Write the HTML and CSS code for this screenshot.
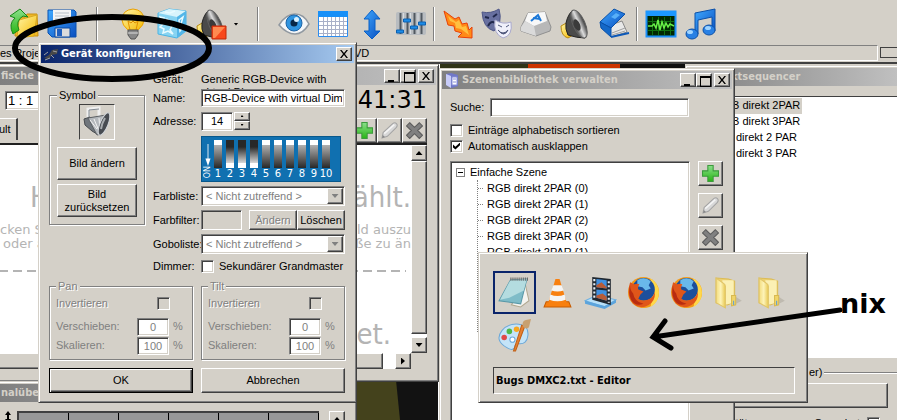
FILE: index.html
```html
<!DOCTYPE html>
<html lang="de">

<head>
    <meta charset="UTF-8">
    <title>Gerät konfigurieren</title>
    <link rel="stylesheet" href="styles.css">
</head>

<body>
    <!-- mehrfach verwendete Symbole -->
    <svg class="symbols" width="0" height="0">
        <defs>
            <linearGradient id="g-green" x1="0" y1="0" x2="0" y2="1">
                <stop offset="0" stop-color="#8be08b" />
                <stop offset="1" stop-color="#28b414" />
            </linearGradient>
            <linearGradient id="g-blue" x1="0" y1="0" x2="1" y2="1">
                <stop offset="0" stop-color="#3fa9ff" />
                <stop offset="1" stop-color="#0a4fc0" />
            </linearGradient>
            <linearGradient id="g-cone" x1="0" y1="0" x2="1" y2="0">
                <stop offset="0" stop-color="#333" />
                <stop offset="0.5" stop-color="#ddd" />
                <stop offset="1" stop-color="#333" />
            </linearGradient>
            <linearGradient id="g-yellow" x1="0" y1="0" x2="1" y2="1">
                <stop offset="0" stop-color="#fff6a8" />
                <stop offset="1" stop-color="#f5b800" />
            </linearGradient>
            <linearGradient id="g-folder" x1="0" y1="0" x2="1" y2="0">
                <stop offset="0" stop-color="#f3dc7c" />
                <stop offset="0.5" stop-color="#fdf3b8" />
                <stop offset="1" stop-color="#e8c850" />
            </linearGradient>
        </defs>
        <symbol id="i-plus" viewBox="0 0 16 16">
            <path d="M5.500 .5h5v5h5v5h-5v5h-5v-5h-5v-5h5z" fill="url(#g-green)" stroke="#3c9a3c" />
        </symbol>
        <symbol id="i-pencil" viewBox="0 0 16 16">
            <path d="M1 15l1-5L11 1.500q2-1.500 3.500 0t0 3.500L6 13.500z" fill="#d8d8d8" stroke="#a4a4a4" />
            <path d="M3 11L12.500 2.500" stroke="#f4f4f4" stroke-width="1.500" />
            <path d="M1 15l.7-2.700 2 1.900z" fill="#888" />
        </symbol>
        <symbol id="i-cross" viewBox="0 0 16 16">
            <path d="M3.500.7L8 5l4.500-4.300 3 3L11 8l4.500 4.500-3 3L8 11l-4.500 4.500-3-3L5 8 .5 3.700z" fill="#808080" stroke="#5c5c5c" />
        </symbol>
        <symbol id="i-speaker" viewBox="0 0 32 32">
            <path d="M2 18l7-4 5 13-5 3q-7-2-7-12z" fill="url(#g-yellow)" stroke="#b88a10" />
            <path d="M7 15q2-9 7-13l12 28q-8 0-17-3-3-6-2-12z" fill="#4a4a4a" stroke="#222" />
            <ellipse cx="20" cy="16" rx="6" ry="15" transform="rotate(-24 20 16)" fill="url(#g-cone)" stroke="#606060" />
            <ellipse cx="18" cy="17" rx="3" ry="6" transform="rotate(-24 18 17)" fill="#3a3a3a" />
        </symbol>
        <symbol id="i-firefox" viewBox="0 0 32 32">
            <circle cx="16" cy="16" r="15" fill="#f39a16" />
            <path d="M22 2q9 5 9 14t-8 14l1-8q5-9-2-20z" fill="#ffd84a" />
            <circle cx="16" cy="13" r="11" fill="#1c4f9c" />
            <path d="M10 4q7-4 13 1l-2 4 2 3-5 2-3-3-5-1z" fill="#69b8ea" />
            <path d="M3 6l4 2q3-1 5 0-2 3-1 5l5 2-3 3-2 4q4 3 9 1 6-2 7-8 1 9-6 13-8 5-15-1Q-1 19 3 6z" fill="#e0561a" />
            <path d="M3 9q0 5 3 8 1 8 10 10-8 3-12-4-3-6-1-14z" fill="#b82c10" />
        </symbol>
        <symbol id="i-folder" viewBox="0 0 32 32">
            <path d="M18 29l10-5-6-4z" fill="#b0aca0" opacity="0.6" />
            <path d="M3 2l12 1 6 2v20l-7 3-11-2z" fill="#ecd070" stroke="#dcbc58" />
            <path d="M9 4l11 0v22l-9 2z" fill="#fbf0b4" />
            <path d="M3 2l7 5q2 1 2 3v21l-9-5z" fill="url(#g-folder)" stroke="#e0c468" />
            <path d="M18 19h4v9l-4 1z" fill="#f0d468" stroke="#d8b850" />
            <path d="M20 24v4" stroke="#5a9ed8" />
        </symbol>
    </svg>

    <div class="desktop">
        <div class="toolbar">
            <button class="tool" aria-label="Öffnen">
                <svg viewBox="0 0 32 32">
                    <path d="M9 9h9l2-3h10l1 22H8z" fill="#f0b828" stroke="#c89010" />
                    <path d="M12 12l18-5-3 21-17 2z" fill="url(#g-yellow)" stroke="#d8a820" />
                    <path d="M6 26Q1 16 8 10L3 8 13 1l8 8-5-1q-8 5-4 14z" fill="url(#g-green)" stroke="#188818" />
                </svg>
            </button>
            <button class="tool" aria-label="Speichern">
                <svg viewBox="0 0 32 32">
                    <path d="M2 2h26l2 2v25H6l-4-4z" fill="url(#g-blue)" stroke="#0a50b0" />
                    <path d="M7 2h18v13H7z" fill="#f4f4f4" />
                    <path d="M9 5h14M9 8h14M9 11h14" stroke="#b8c0c8" />
                    <path d="M9 20h15v9H9z" fill="#dcdcdc" stroke="#0a48a0" />
                    <path d="M11 21h5v7h-5z" fill="#2060c0" />
                </svg>
            </button>
            <span class="sep wide"></span>
            <button class="tool" aria-label="Licht">
                <svg viewBox="0 0 32 32">
                    <path d="M16 1Q5 2 5 12q0 5 6 10h10q6-5 6-10Q27 2 16 1z" fill="url(#g-yellow)" stroke="#eaa000" />
                    <path d="M13 22l-2-9 3 2 2-2 2 2 3-2-2 9" fill="none" stroke="#e09000" />
                    <path d="M11 22h10v5l-3 4h-4l-3-4z" fill="#888" stroke="#555" />
                    <path d="M11 25h10" stroke="#ddd" />
                </svg>
            </button>
            <button class="tool" aria-label="Einfrieren">
                <svg viewBox="0 0 32 32">
                    <path d="M2 5l11-4 17 2v20l-9 7-19-4z" fill="#88d4f2" stroke="#4ab4e4" />
                    <path d="M2 5l11-4 17 2-9 6z" fill="#d8f4fc" />
                    <path d="M21 9l9-6v20l-9 7z" fill="#54b6e8" />
                    <path d="M4 9l4 1-2 3 5-2 4 3-4 2 5 2-2 4 3 4-5-3-5 2 1-4-4-2 3-3zM23 12l4-3-2 7 3 2-4 5zM9 4l5 1 5-2" fill="none" stroke="#e8fbff" stroke-width="1.500" />
                </svg>
            </button>
            <button class="tool" aria-label="Ton aus">
                <svg viewBox="0 0 32 32">
                    <use href="#i-speaker" />
                    <path d="M17 18h14v13H17z" fill="#f8481c" stroke="#c02808" />
                    <path d="M18 19h12l-10 11h-2z" fill="#ff8a50" />
                </svg>
            </button>
            <button class="drop" aria-label="Mehr"></button>
            <span class="sep wide"></span>
            <button class="tool" aria-label="Ansicht">
                <svg viewBox="0 0 32 32">
                    <path d="M1 17Q8 6 17 6t14 10q-6 10-14 10T1 17z" fill="#f4f6f8" stroke="#9098a0" stroke-width="1.500" />
                    <circle cx="16" cy="15" r="8" fill="#2f94e0" stroke="#1c64a8" />
                    <circle cx="16" cy="15" r="3.500" fill="#082848" />
                    <circle cx="18.500" cy="11.500" r="2.500" fill="#d8f0ff" />
                </svg>
            </button>
            <button class="tool" aria-label="Kalender">
                <svg viewBox="0 0 32 32">
                    <path d="M1.500 3.500h29v25h-29z" fill="#fff" stroke="#2c8cf0" />
                    <path d="M1 3h30v6H1z" fill="#1890f8" />
                    <path d="M2 13.500h28M2 17.500h28M2 21.500h28M2 25.500h28M6.500 9v19M10.500 9v19M14.500 9v19M18.500 9v19M22.500 9v19M26.500 9v19" stroke="#a8b0c8" />
                </svg>
            </button>
            <button class="tool" aria-label="Höhe">
                <svg viewBox="0 0 32 32">
                    <path d="M16 2l8 9h-5v12h5l-8 8-8-8h5V11H8z" fill="url(#g-blue)" stroke="#0860c8" />
                </svg>
            </button>
            <button class="tool" aria-label="Regler">
                <svg viewBox="0 0 32 32">
                    <rect x="1" y="4" width="30" height="23" rx="2" fill="#b8bcc0" />
                    <path d="M5.500 5v21M12.500 5v21M19.500 5v21M26.500 5v21" stroke="#505860" stroke-width="2" />
                    <path d="M8.500 5v21M15.500 5v21M23 5v21" stroke="#d8dce0" />
                    <path d="M1.500 22h7v3h-7zM8.500 11h7v3h-7zM15.500 18h7v3h-7zM23.500 14h7v3h-7z" fill="#1c8ce8" stroke="#0c60b0" />
                </svg>
            </button>
            <span class="sep"></span>
            <button class="tool" aria-label="Effekt">
                <svg viewBox="0 0 32 32">
                    <path d="M2 3l11 8 4-2 3 7 5-1 2 7 3-3v11l-14-1 4-4-7-2-1-5-6-1z" fill="#ff8a18" stroke="#e84008" />
                    <path d="M6 8l8 6 3-2 3 7 4-1 3 9-8-6-5-1-1-5-5-2z" fill="#ffc040" />
                </svg>
            </button>
            <button class="tool" aria-label="Masken">
                <svg viewBox="0 0 32 32">
                    <path d="M1 4q9 2 17-3 4 14-5 22Q2 20 1 4z" fill="#6870a0" stroke="#505888" />
                    <path d="M4 9l4 1M12 9l4-3M7 18q3-6 7-3" stroke="#20284c" stroke-width="2" fill="none" />
                    <path d="M14 12q8 5 16 2 2 14-8 16-10-4-8-18z" fill="#f0f0fa" stroke="#a8a8cc" />
                    <path d="M17 17l4 2M25 19l3-2M17 22q5 6 10 0-4 8-10 0z" stroke="#50587c" fill="#50587c" />
                </svg>
            </button>
            <button class="tool" aria-label="Taste">
                <svg viewBox="0 0 32 32">
                    <path d="M8 5l17-1 6 15-1 4-14 5L1 23v-4z" fill="#b8b8b8" stroke="#909090" />
                    <path d="M8 5l17-1 2 9-13 5-9-5z" fill="#f8f8f8" />
                    <path d="M5 13l9 5 2 10L1 23v-4z" fill="#dadada" />
                    <path d="M11 13l7-6 3 6M13 10l7 1" fill="none" stroke="#1c78d8" stroke-width="2" />
                </svg>
            </button>
            <button class="tool" aria-label="Ton"><svg><use href="#i-speaker" /></svg></button>
            <button class="tool" aria-label="Buch">
                <svg viewBox="0 0 32 32">
                    <path d="M13 29l16-5-5-11-14 5z" fill="#e8e8e8" stroke="#888" />
                    <path d="M14 25l13-5M14 27l13-4" stroke="#a0a0a0" />
                    <path d="M2 14L16 1l11 5-14 14z" fill="url(#g-blue)" stroke="#0850a8" />
                    <path d="M2 14l11 6v9L3 20z" fill="#1468c8" stroke="#0850a8" />
                    <path d="M13 29l18-4" stroke="#0c58b8" stroke-width="2" />
                    <path d="M13 9l5-4 4 2-5 4z" fill="#58b0f8" />
                </svg>
            </button>
            <span class="sep"></span>
            <button class="tool" aria-label="Oszilloskop">
                <svg viewBox="0 0 32 32">
                    <path d="M1.500 3.500h29v25h-29z" fill="#002800" stroke="#1c90f8" stroke-width="2" />
                    <path d="M1 3h30v5H1z" fill="#1c98ff" />
                    <path d="M7.500 9v18M13.500 9v18M19.500 9v18M25.500 9v18M3 13.500h26M3 22.500h26" stroke="#107010" />
                    <path d="M3 18h4l2-2 2 4 2-8 2 10 2-8 2 6 2-5 2 4 2-3 4 2" fill="none" stroke="#68f048" stroke-width="1.500" />
                </svg>
            </button>
            <button class="tool" aria-label="Musik">
                <svg viewBox="0 0 32 32">
                    <path d="M11 26V5l20-4v22h-3V9l-14 3v14z" fill="url(#g-blue)" stroke="#0c50a8" />
                    <ellipse cx="8" cy="26" rx="6" ry="5" fill="#2880e4" stroke="#0c50a8" />
                    <ellipse cx="25" cy="22" rx="6" ry="5" fill="#2880e4" stroke="#0c50a8" />
                    <ellipse cx="6" cy="24" rx="3" ry="2" fill="#a0d4ff" />
                    <ellipse cx="24" cy="20" rx="3" ry="2" fill="#a0d4ff" />
                </svg>
            </button>
        </div>
        <div class="status">
            <div class="status-panel"><span class="status-project">es Proje</span><span>VD</span></div>
            <div class="status-box"></div>
        </div>

        <main class="workspace">
            <svg class="wallpaper" viewBox="0 0 460 356">
                <path d="M0 0h460v356H0z" fill="#44421c" />
                <path d="M396 316h42v40h-38z" fill="#121212" />
                <path d="M438 0h22v356h-22z" fill="#fff" />
            </svg>
            <div class="stripes"><i class="olive"></i><i class="red"></i><i class="black"></i></div>
        </main>

        <!-- Grafische Bedienung -->
        <section class="window stage">
            <header class="title inactive">
                <h2>fische B</h2>
                <span class="caption">
                    <button class="cap min" aria-label="Minimieren"></button><button class="cap max" aria-label="Maximieren"></button><button class="cap close" aria-label="Schließen"></button>
                </span>
            </header>
            <div class="stage-head">
                <input class="zoom" type="text" value="1 : 1" aria-label="Zoom">
                <span class="clock">41:31</span>
            </div>
            <div class="stage-tabs">
                <button class="tab">ult</button>
                <span class="stage-tools">
                    <button class="icon-btn" aria-label="Hinzufügen"><svg><use href="#i-plus" /></svg></button><button class="icon-btn" aria-label="Bearbeiten"><svg><use href="#i-pencil" /></svg></button><button class="icon-btn" aria-label="Löschen"><svg><use href="#i-cross" /></svg></button>
                </span>
            </div>
            <div class="canvas">
                <div class="hint">
                    <p class="big"><span>H</span><span>ählt.</span></p>
                    <p class="small"><span>cken S</span><span>ild auszu</span></p>
                    <p class="small second"><span>oder a</span><span>ße zu än</span></p>
                    <div class="dashes"></div>
                    <p class="big last"><span></span><span>et.</span></p>
                </div>
                <div class="vscroll">
                    <button class="arrow up" aria-label="Nach oben"></button>
                    <div class="thumb"></div>
                    <button class="arrow down" aria-label="Nach unten"></button>
                </div>
                <div class="hscroll">
                    <div class="thumb"></div>
                    <button class="arrow right" aria-label="Nach rechts"></button>
                </div>
            </div>
        </section>

        <!-- Kanalübersicht -->
        <section class="window channels">
            <header class="title inactive"><h2>nalüber</h2></header>
            <div class="channel-body">
                <svg class="updown" viewBox="0 0 14 14"><path d="M5 0l3 4H6v4h2l-3 4-3-4h2V4H2z" /></svg>
                <div class="cells"><span></span><span></span><span></span><span></span><span></span><span></span></div>
                <button class="arrow up" aria-label="Nach oben"></button>
            </div>
        </section>

        <!-- Effektsequencer -->
        <section class="window sequencer">
            <header class="title inactive"><h2>ktsequencer</h2></header>
            <ul class="seq-list">
                <li class="selected">B direkt 2PAR</li>
                <li>B direkt 3PAR</li>
                <li class="inner">direkt 2 PAR</li>
                <li class="inner">direkt 3 PAR</li>
            </ul>
            <div class="seq-foot">
                <fieldset class="group">
                    <legend>er)</legend>
                    <button class="btn" aria-label="Auswahl"></button>
                    <div class="seq-row">
                        <span>ität:</span>
                        <label for="generated">Generiert:</label>
                        <input type="checkbox" id="generated">
                    </div>
                </fieldset>
            </div>
        </section>

        <!-- Szenenbibliothek -->
        <section class="window library">
            <header class="title inactive">
                <svg class="title-icon" viewBox="0 0 16 16">
                    <path d="M2 2l5-1 7 2v11l-6 2-6-3z" fill="#7078c8" />
                    <path d="M2 2l5 2v12l-5-3z" fill="#c8ccf8" />
                    <path d="M8 5h5v8H8zM9 7h3M9 10h3" fill="#fff" stroke="#8890d8" />
                </svg>
                <h2>Szenenbibliothek verwalten</h2>
                <span class="caption">
                    <button class="cap min" aria-label="Minimieren"></button><button class="cap max" aria-label="Maximieren"></button><button class="cap close" aria-label="Schließen"></button>
                </span>
            </header>
            <div class="library-body">
                <div class="search">
                    <label for="search">Suche:</label>
                    <input type="text" id="search">
                </div>
                <div class="check"><input type="checkbox" id="sort"><label for="sort">Einträge alphabetisch sortieren</label></div>
                <div class="check"><input type="checkbox" id="expand" checked><label for="expand">Automatisch ausklappen</label></div>
                <div class="tree-row">
                    <div class="tree">
                        <div class="tree-root"><span class="minus"></span>Einfache Szene</div>
                        <ul>
                            <li>RGB direkt 2PAR (0)</li>
                            <li>RGB direkt 2PAR (1)</li>
                            <li>RGB direkt 2PAR (2)</li>
                            <li>RGB direkt 3PAR (0)</li>
                            <li>RGB direkt 2PAR (1)</li>
                        </ul>
                    </div>
                    <div class="tree-tools">
                        <button class="icon-btn" aria-label="Hinzufügen"><svg><use href="#i-plus" /></svg></button>
                        <button class="icon-btn" aria-label="Bearbeiten"><svg><use href="#i-pencil" /></svg></button>
                        <button class="icon-btn" aria-label="Löschen"><svg><use href="#i-cross" /></svg></button>
                    </div>
                </div>
            </div>
        </section>

        <!-- Gerät konfigurieren -->
        <section class="window dialog">
            <header class="title">
                <svg class="title-icon" viewBox="0 0 16 16">
                    <path d="M1 12l5-3 3-5 6-1-1 5-5 1-3 4z" fill="#484848" />
                    <path d="M1 9l4-3M2 14l5-2M10 5l4 1M8 9l3 3" stroke="#a0a0a0" />
                </svg>
                <h2>Gerät konfigurieren</h2>
                <span class="caption"><button class="cap close" aria-label="Schließen"></button></span>
            </header>
            <form class="dialog-body">
                <div class="device">
                    <fieldset class="group symbol">
                        <legend>Symbol</legend>
                        <div class="picture">
                            <svg viewBox="0 0 32 32">
                                <path d="M7 15V3l11-1v10" fill="none" stroke="#f0f0f0" stroke-width="3" />
                                <path d="M8 15V4l10-1" fill="none" stroke="#808890" />
                                <path d="M3 13l6-2 7 17-5-3-7-6z" fill="#70767c" stroke="#484c50" />
                                <path d="M7 12l18-3-4 19-5 1z" fill="#b4b8bc" stroke="#5c6064" />
                                <path d="M9 14l7 9M13 13l5 12M18 12l1 12" stroke="#f4f4f4" />
                                <ellipse cx="23" cy="18" rx="4" ry="12" transform="rotate(22 23 18)" fill="#484c52" stroke="#d4d8dc" />
                                <path d="M24 12q-3 5-4 11" fill="none" stroke="#a8acb0" stroke-width="2" />
                            </svg>
                        </div>
                        <button type="button" class="btn">Bild ändern</button>
                        <button type="button" class="btn">Bild<br>zurücksetzen</button>
                    </fieldset>
                    <div class="fields">
                        <span class="row-device">Gerät:</span>
                        <span class="row-device">Generic RGB-Device with virtual Dimmer</span>

                        <label for="name">Name:</label>
                        <input type="text" id="name" value="RGB-Device with virtual Dimmer">

                        <label for="address">Adresse:</label>
                        <div class="spin">
                            <input type="text" id="address" value="14">
                            <span><button type="button" class="arrow up" aria-label="Mehr"></button><button type="button" class="arrow down" aria-label="Weniger"></button></span>
                        </div>

                        <div class="dip">
                            <div class="dip-on">
                                <svg viewBox="0 0 9 26"><path d="M4.500 0v18" stroke="#fff" /><path d="M1.500 17h6l-3 9z" fill="#fff" /></svg>
                                <span>ON</span>
                            </div>
                            <div class="dip-switch"><i></i>1</div>
                            <div class="dip-switch on"><i></i>2</div>
                            <div class="dip-switch on"><i></i>3</div>
                            <div class="dip-switch on"><i></i>4</div>
                            <div class="dip-switch"><i></i>5</div>
                            <div class="dip-switch"><i></i>6</div>
                            <div class="dip-switch"><i></i>7</div>
                            <div class="dip-switch"><i></i>8</div>
                            <div class="dip-switch"><i></i>9</div>
                            <div class="dip-switch"><i></i>10</div>
                        </div>

                        <label for="colors">Farbliste:</label>
                        <div class="combo"><select id="colors" disabled><option>&lt; Nicht zutreffend &gt;</option></select><span class="arrow down"></span></div>

                        <span>Farbfilter:</span>
                        <div class="filter">
                            <span class="swatch"></span>
                            <button type="button" class="btn" disabled>Ändern</button><button type="button" class="btn">Löschen</button>
                        </div>

                        <label for="gobos">Goboliste:</label>
                        <div class="combo"><select id="gobos" disabled><option>&lt; Nicht zutreffend &gt;</option></select><span class="arrow down"></span></div>

                        <span>Dimmer:</span>
                        <div class="check"><input type="checkbox" id="grand"><label for="grand">Sekundärer Grandmaster</label></div>
                    </div>
                </div>
                <div class="pair axes">
                    <fieldset class="group axis" disabled>
                        <legend>Pan</legend>
                        <div class="invert"><label for="pan-inv">Invertieren</label><input type="checkbox" id="pan-inv"></div>
                        <div><label for="pan-move">Verschieben:</label><input type="text" id="pan-move" value="0"><span>%</span></div>
                        <div><label for="pan-scale">Skalieren:</label><input type="text" id="pan-scale" value="100"><span>%</span></div>
                    </fieldset>
                    <fieldset class="group axis" disabled>
                        <legend>Tilt</legend>
                        <div class="invert"><label for="tilt-inv">Invertieren</label><input type="checkbox" id="tilt-inv"></div>
                        <div><label for="tilt-move">Verschieben:</label><input type="text" id="tilt-move" value="0"><span>%</span></div>
                        <div><label for="tilt-scale">Skalieren:</label><input type="text" id="tilt-scale" value="100"><span>%</span></div>
                    </fieldset>
                </div>
                <div class="pair actions">
                    <button type="button" class="btn default">OK</button>
                    <button type="button" class="btn">Abbrechen</button>
                </div>
            </form>
        </section>

        <!-- Fensterwechsel (Alt+Tab) -->
        <section class="window switcher">
            <div class="apps">
                <span class="app current">
                    <svg viewBox="0 0 32 32">
                        <path d="M26 6l4 18-8 6-9-2z" fill="#f4f4f0" stroke="#b0a890" />
                        <path d="M12 4l16-1-6 24-21-3z" fill="#7fbcc8" stroke="#5898a8" />
                        <path d="M12 4l16-1-3 11-14 7-9 2z" fill="#b4dce0" />
                        <path d="M12 3h17" stroke="#606060" stroke-width="3" stroke-dasharray="1 1" />
                    </svg>
                </span>
                <span class="app">
                    <svg viewBox="0 0 32 32">
                        <path d="M5 25h22l2 5H3z" fill="#f88010" stroke="#c85c00" />
                        <path d="M14 3h4l7 23q-9 4-18 0z" fill="#f88010" />
                        <path d="M12 9h8l2 5q-6 2-12 0zM9 18q7 3 14 0l1 5q-8 3-16 0z" fill="#f4f4f4" />
                    </svg>
                </span>
                <span class="app">
                    <svg viewBox="0 0 32 32">
                        <path d="M1 24l11-5 19 4-11 7z" fill="#b8e0f8" stroke="#70b0e0" />
                        <path d="M1 24v3l19 5v-3zM20 29l11-6v3l-11 6z" fill="#5ca4dc" />
                        <path d="M8 1l18 2v25L8 23z" fill="#202830" />
                        <path d="M12 3l10 1v8l-10-1zM12 13l10 1v10l-10-3z" fill="#4090e0" />
                        <path d="M12 9l5-3 5 5v1l-10-1zM12 19l6-2 4 3v4l-10-3z" fill="#b85c38" />
                        <path d="M10 3v20M24 5v21" stroke="#e8f0f8" stroke-width="2" stroke-dasharray="2 2" />
                    </svg>
                </span>
                <span class="app"><svg><use href="#i-firefox" /></svg></span>
                <span class="app"><svg><use href="#i-firefox" /></svg></span>
                <span class="app"><svg><use href="#i-folder" /></svg></span>
                <span class="app"><svg><use href="#i-folder" /></svg></span>
                <span class="app">
                    <svg viewBox="0 0 32 32">
                        <path d="M4 11Q10 4 20 5t9 11q-1 9-9 8-4 0-4 4-2 3-7 0Q-4 21 4 11z" fill="#c4e4f8" stroke="#6ca8d8" />
                        <circle cx="6" cy="18" r="2.700" fill="#e04848" />
                        <circle cx="11" cy="12" r="2.700" fill="#50b848" />
                        <circle cx="18" cy="10" r="2.700" fill="#f8a820" />
                        <circle cx="14" cy="20" r="2.500" fill="#fff" stroke="#6ca8d8" />
                        <path d="M26 7l-9 24-2 0 8-25z" fill="#e88030" stroke="#c06018" />
                        <path d="M24 7q-1-5 3-6l5-1-2 8q-3 3-6-1z" fill="#c8a070" />
                    </svg>
                </span>
            </div>
            <div class="app-name">Bugs DMXC2.txt - Editor</div>
        </section>

        <!-- handgezeichnete Markierungen -->
        <svg class="marks" width="897" height="420">
            <ellipse cx="112" cy="48" rx="97" ry="31" fill="none" stroke="#000" stroke-width="6" />
            <path d="M840 310L653 337M665 321L653 337l18 11" fill="none" stroke="#000" stroke-width="5" stroke-linecap="round" />
        </svg>
        <strong class="note">nix</strong>
    </div>
</body>

</html>
```
FILE: styles.css
```css
* {
    box-sizing: border-box;
}

body {
    margin: 0;
    font-family: "Liberation Sans", Arial, sans-serif;
    font-size: 11px;
    line-height: 13px;
    color: #000;
    background: #d4d0c8;
}

h2, p, ul {
    margin: 0;
    padding: 0;
    list-style: none;
}

svg {
    display: block;
}

button, input, select {
    font: inherit;
    color: inherit;
    margin: 0;
    padding: 0;
    border-radius: 0;
}

.symbols {
    position: absolute;
}

.desktop {
    position: relative;
    display: flex;
    flex-direction: column;
    height: 100vh;
    overflow: hidden;
}

/* Werkzeugleiste */
.toolbar {
    display: flex;
    align-items: center;
    height: 45px;
    padding: 3px 3px 0;
}

.tool {
    flex: none;
    width: 39px;
    height: 32px;
    border: 0;
    background: none;
}

.tool svg {
    width: 32px;
    height: 32px;
    margin: 0 auto;
}

.drop {
    width: 12px;
    height: 32px;
    border: 0;
    background: none;
}

.drop::after {
    content: "";
    display: block;
    margin: 0 auto;
    width: 5px;
    height: 3px;
    background: #000;
    clip-path: polygon(0 0, 100% 0, 50% 100%);
}

.sep {
    flex: none;
    width: 2px;
    height: 34px;
    margin: 0 3px;
    border-left: 1px solid #808080;
    border-right: 1px solid #fff;
}

.sep.wide {
    margin: 0 15px;
}

.status {
    display: flex;
    gap: 2px;
    height: 17px;
}

.status-panel {
    flex: 1;
    display: flex;
    align-items: center;
    height: 16px;
    border: solid;
    border-width: 1px 1px 1px 0;
    border-color: #808080 #fff #fff;
}

.status-project {
    width: 354px;
}

.status-box {
    width: 17px;
    height: 11px;
    margin-top: 2px;
    border: 1px solid #404040;
    border-right: 0;
}

.workspace {
    position: relative;
    flex: 1;
    background: #d4d0c8;
    border-top: 2px solid #404040;
    overflow: hidden;
}

.wallpaper {
    width: 460px;
    height: 356px;
}

.stripes {
    position: absolute;
    top: 0;
    left: 440px;
    display: flex;
    height: 4px;
}

.stripes i {
    width: 88px;
    background: #303418;
}

.stripes .red {
    width: 92px;
    background: #cc3300;
}

.stripes .black {
    width: 65px;
    background: #101010;
}

/* Fenster */
.window {
    position: absolute;
    display: flex;
    flex-direction: column;
    padding: 2px;
    background: #d4d0c8;
    border: 1px solid;
    border-color: #d4d0c8 #404040 #404040 #d4d0c8;
    box-shadow: inset 1px 1px #fff, inset -1px -1px #808080;
}

.title {
    flex: none;
    display: flex;
    align-items: center;
    height: 18px;
    padding: 0 2px;
    color: #fff;
    background: linear-gradient(to right, #0a246a, #a6caf0);
}

.title.inactive {
    color: #d4d0c8;
    background: linear-gradient(to right, #808080, #c0c0c0);
}

.title h2, .app-name {
    flex: 1;
    font-family: "DejaVu Sans Condensed", Tahoma, sans-serif;
    font-size: 11px;
    line-height: 16px;
    font-weight: bold;
    white-space: nowrap;
}

.title-icon {
    width: 16px;
    height: 16px;
    margin-right: 2px;
}

.caption {
    display: flex;
}

.cap {
    position: relative;
    width: 16px;
    height: 14px;
}

.cap.close {
    margin-left: 2px;
}

.cap, .btn, .icon-btn, .arrow, .thumb {
    background: #d4d0c8;
    border: 1px solid;
    border-color: #fff #404040 #404040 #fff;
    box-shadow: inset -1px -1px #808080;
}

.cap::after {
    content: "";
    position: absolute;
    left: 3px;
    top: 2px;
    width: 8px;
    height: 8px;
}

.min::after {
    width: 6px;
    border-bottom: 2px solid #000;
}

.max::after {
    width: 9px;
    border: 1px solid #000;
    border-top-width: 2px;
}

.close::after {
    background: #000;
    clip-path: polygon(0 0, 20% 0, 50% 36%, 80% 0, 100% 0, 62% 50%, 100% 100%, 80% 100%, 50% 64%, 20% 100%, 0 100%, 38% 50%);
}

.arrow {
    flex: none;
    display: flex;
    align-items: center;
    justify-content: center;
    width: 16px;
    height: 16px;
}

.arrow::after {
    content: "";
    width: 7px;
    height: 4px;
    background: #000;
    clip-path: polygon(0 0, 100% 0, 50% 100%);
}

.arrow.up::after {
    clip-path: polygon(50% 0, 100% 100%, 0 100%);
}

.arrow.right::after {
    width: 4px;
    height: 7px;
    clip-path: polygon(0 0, 100% 50%, 0 100%);
}

.icon-btn {
    display: flex;
    align-items: center;
    justify-content: center;
    width: 25px;
    height: 25px;
}

.icon-btn svg {
    width: 17px;
    height: 17px;
}

.btn:disabled {
    color: #808080;
    text-shadow: 1px 1px #fff;
}

/* Eingabefelder */
input[type="text"], .tree, select, .swatch {
    background: #fff;
    border: 1px solid;
    border-color: #808080 #fff #fff #808080;
    box-shadow: inset 1px 1px #404040, inset -1px -1px #d4d0c8;
    outline: none;
}

input[type="text"] {
    min-width: 0;
    padding: 0 2px;
}

input[type="checkbox"] {
    appearance: none;
    flex: none;
    width: 13px;
    height: 13px;
    background: #fff;
    border: 1px solid;
    border-color: #808080 #fff #fff #808080;
    box-shadow: inset 1px 1px #404040, inset -1px -1px #d4d0c8;
}

input[type="checkbox"]:checked::after {
    content: "";
    display: block;
    width: 7px;
    height: 7px;
    margin: 2px;
    background: #000;
    clip-path: polygon(0 30%, 35% 60%, 100% 0, 100% 40%, 35% 100%, 0 70%);
}

.check {
    display: flex;
    align-items: center;
    gap: 5px;
    height: 16px;
    white-space: nowrap;
}

.group {
    min-width: 0;
    margin: 0;
    border: 1px solid #808080;
    box-shadow: 1px 1px #fff, inset 1px 1px #fff;
}

.group legend {
    padding: 0 2px;
    background: #d4d0c8;
}

/* linkes Fenster */
.stage {
    left: -4px;
    top: 64px;
    width: 443px;
}

.stage-head {
    display: flex;
    justify-content: space-between;
    align-items: center;
    height: 30px;
    padding: 0 9px 0 6px;
}

.stage-head .zoom {
    width: 60px;
    height: 19px;
    font-size: 13px;
}

.clock {
    font-family: "DejaVu Sans", Verdana, sans-serif;
    font-size: 24px;
    line-height: 30px;
}

.stage-tabs {
    display: flex;
    justify-content: space-between;
    height: 28px;
    padding: 3px 9px 0 0;
}

.tab {
    width: 19px;
    height: 22px;
    background: #d4d0c8;
    border: solid;
    border-width: 1px 2px 0 0;
    border-color: #fff #404040;
    text-align: left;
}

.stage-tools {
    display: flex;
}

.canvas {
    display: grid;
    grid-template-columns: 1fr 16px;
    grid-template-rows: 208px 16px;
    margin: 0 9px 10px 0;
    border-top: 2px solid #202020;
}

.hint {
    padding-top: 34px;
    color: #b4b4b4;
    background: #fff;
    overflow: hidden;
    font-family: "DejaVu Sans", Verdana, sans-serif;
}

.hint p {
    display: flex;
    justify-content: space-between;
    white-space: nowrap;
}

.hint .big {
    padding: 0 0 0 31px;
    font-family: "DejaVu Sans Condensed", Tahoma, sans-serif;
    font-size: 29px;
    line-height: 36px;
}

.hint .small {
    padding: 0 0 0 1px;
    margin-top: 8px;
    font-size: 13px;
    line-height: 14px;
}

.hint .second {
    margin-top: 0;
    padding-left: 4px;
}

.dashes {
    height: 2px;
    margin: 19px 5px 0 0;
    background: repeating-linear-gradient(to right, #b4b4b4 0 9px, #fff 9px 14px);
}

.hint .last {
    margin-top: 44px;
    padding-right: 20px;
}

.vscroll, .hscroll {
    display: flex;
    background: #fff;
}

.vscroll {
    flex-direction: column;
}

.thumb {
    flex: 1;
}

.vscroll .thumb {
    margin-bottom: 3px;
}

.hscroll .thumb {
    margin-right: 12px;
}

/* Kanäle */
.channels {
    left: -4px;
    top: 381px;
    width: 361px;
    bottom: -20px;
}

.channel-body {
    display: flex;
    padding: 9px 9px 0 4px;
}

.updown {
    width: 14px;
    height: 14px;
}

.cells {
    display: flex;
    width: 302px;
    height: 24px;
    margin-right: 10px;
    border: solid #404040;
    border-width: 2px 0 0 2px;
}

.cells span {
    flex: 1;
    background: #989898;
    border-right: 1px solid #000;
}

/* Sequencer */
.sequencer {
    left: 685px;
    right: -4px;
    top: 65px;
    bottom: -20px;
}

.sequencer .title {
    padding-left: 43px;
}

.seq-list {
    flex: 1;
    margin-top: 10px;
    padding: 1px 0 0 44px;
    background: #fff;
    border-top: 1px solid #404040;
}

.seq-list li {
    width: max-content;
    height: 16px;
    padding: 1px 2px 0 0;
}

.seq-list .selected {
    background: #d4d0c8;
}

.seq-list .inner {
    padding-left: 4px;
}

.seq-foot {
    height: 81px;
    padding: 8px 0 0;
    border-top: 2px solid #fff;
}

.seq-foot .group {
    height: 90px;
    padding: 4px 9px 0 40px;
}

.seq-foot legend {
    margin-left: 78px;
}

.seq-foot .btn {
    width: 100%;
    height: 25px;
}

.seq-row {
    display: flex;
    align-items: center;
    padding: 7px 8px 0 4px;
}

.seq-row span {
    flex: 1;
}

.seq-row label {
    margin-right: 4px;
}

/* Szenenbibliothek */
.library {
    left: 439px;
    top: 68px;
    width: 296px;
    bottom: -20px;
}

.library-body {
    flex: 1;
    display: flex;
    flex-direction: column;
    padding: 9px 9px 0 8px;
}

.search {
    display: flex;
    align-items: center;
    margin: 0 34px 5px 0;
}

.search label {
    width: 40px;
}

.search input {
    flex: 1;
    height: 19px;
}

.tree-row {
    flex: 1;
    display: flex;
    gap: 8px;
    margin-top: 7px;
}

.tree {
    flex: 1;
    padding: 2px 5px;
}

.tree-root {
    display: flex;
    align-items: center;
    gap: 5px;
    height: 16px;
}

.minus {
    width: 9px;
    height: 9px;
    border: 1px solid #808080;
    background: linear-gradient(#000, #000) center / 5px 1px no-repeat;
}

.tree ul {
    height: 152px;
    margin-left: 21px;
    border-left: 1px dotted #808080;
}

.tree li {
    display: flex;
    align-items: center;
    gap: 4px;
    height: 16px;
}

.tree li::before {
    content: "";
    width: 5px;
    border-top: 1px dotted #808080;
}

.tree-tools {
    display: flex;
    flex-direction: column;
    gap: 7px;
}

/* Dialog */
.dialog {
    left: 38px;
    top: 42px;
    width: 319px;
}

.dialog-body {
    padding: 10px 9px 7px 8px;
}

.device {
    display: flex;
    gap: 8px;
    align-items: flex-start;
}

.symbol {
    width: 96px;
    margin-top: 16px;
    padding: 2px 7px 7px;
}

.picture {
    width: 36px;
    height: 36px;
    margin: 0 auto 7px;
    padding: 1px;
    border: 1px solid;
    border-color: #404040 #fff #fff #404040;
}

.symbol .btn {
    width: 100%;
    height: 33px;
    margin-bottom: 4px;
}

.symbol .btn:last-child {
    margin-bottom: 0;
}

.fields {
    flex: 1;
    display: grid;
    grid-template-columns: 48px 1fr;
    grid-template-rows: 16px 18px 28px 47px 28px 20px 28px 16px;
    align-items: center;
    white-space: nowrap;
}

.row-device {
    height: 16px;
    white-space: normal;
    overflow: hidden;
}

#name {
    width: 100%;
    height: 18px;
}

.spin {
    display: flex;
    gap: 1px;
}

.spin input {
    width: 32px;
    height: 19px;
    text-align: center;
}

.spin .arrow {
    height: 9px;
}

.spin .arrow::after {
    width: 3px;
    height: 2px;
}

.dip {
    grid-column: 2;
    display: flex;
    width: 140px;
    height: 46px;
    padding: 3px 2px;
    color: #fff;
    background: #1070b0;
    border: 1px solid #08588c;
    font-family: "DejaVu Sans", Verdana, sans-serif;
    font-size: 10px;
    line-height: 12px;
}

.dip-on {
    width: 8px;
    padding-top: 4px;
}

.dip-on svg {
    width: 8px;
    height: 22px;
}

.dip-on span {
    writing-mode: vertical-rl;
    transform: rotate(180deg);
    font-size: 8px;
    line-height: 8px;
}

.dip-switch {
    flex: none;
    display: flex;
    flex-direction: column;
    align-items: center;
    width: 12px;
}

.dip-switch i {
    flex: none;
    width: 8px;
    height: 28px;
    border-top: 5px solid #fff;
    background: linear-gradient(#b0b0b0, #282828);
}

.dip-switch.on i {
    border-top: 0;
    border-bottom: 5px solid #fff;
    background: linear-gradient(#282828, #282828 30%, #d8d8d8);
}

.combo {
    position: relative;
    height: 20px;
}

.combo select {
    appearance: none;
    width: 100%;
    height: 20px;
    padding-left: 4px;
    color: #808080;
    opacity: 1;
}

.combo .arrow {
    position: absolute;
    right: 2px;
    top: 2px;
}

.combo .arrow::after {
    background: #808080;
}

.filter {
    display: flex;
}

.swatch {
    width: 41px;
    height: 20px;
    margin-right: 7px;
    background: #d4d0c8;
}

.filter .btn {
    flex: 1;
    height: 20px;
}

.pair {
    display: grid;
    grid-template-columns: 1fr 1fr;
    gap: 8px;
}

.axes {
    margin-top: 6px;
}

.axis {
    height: 80px;
    padding: 0 6px;
    color: #808080;
}

.axis legend {
    text-shadow: 1px 1px #fff;
}

.axis div {
    display: flex;
    align-items: center;
    height: 19px;
}

.axis .invert {
    height: 20px;
    margin-bottom: 4px;
    text-shadow: 1px 1px #fff;
}

.axis label {
    width: 81px;
}

.axis input[type="text"] {
    width: 32px;
    height: 18px;
    text-align: center;
}

.axis input[type="checkbox"] {
    margin-left: 20px;
    background: #d4d0c8;
}

.axis span {
    margin-left: 4px;
}

.actions {
    margin-top: 8px;
}

.actions .btn {
    height: 25px;
}

.actions .default {
    border-color: #000;
    box-shadow: inset 1px 1px #fff, inset -1px -1px #404040, inset -2px -2px #808080;
}

/* Alt+Tab */
.switcher {
    left: 478px;
    top: 252px;
    width: 330px;
    padding: 18px 12px 8px 14px;
}

.apps {
    display: grid;
    grid-template-columns: repeat(7, 43px);
    height: 96px;
    align-content: start;
}

.app {
    width: 43px;
    height: 43px;
    padding: 5px;
}

.app.current {
    padding: 3px;
    border: 2px solid #0a246a;
}

.app svg {
    width: 33px;
    height: 33px;
}

.app-name {
    padding: 5px 2px 4px;
    border: 1px solid;
    border-color: #404040 #fff #fff #404040;
}

/* Markierungen */
.marks {
    position: absolute;
    left: 0;
    top: 0;
    pointer-events: none;
}

.note {
    position: absolute;
    left: 840px;
    top: 288px;
    font-family: "DejaVu Sans", Verdana, sans-serif;
    font-size: 27px;
    line-height: 32px;
}
```
